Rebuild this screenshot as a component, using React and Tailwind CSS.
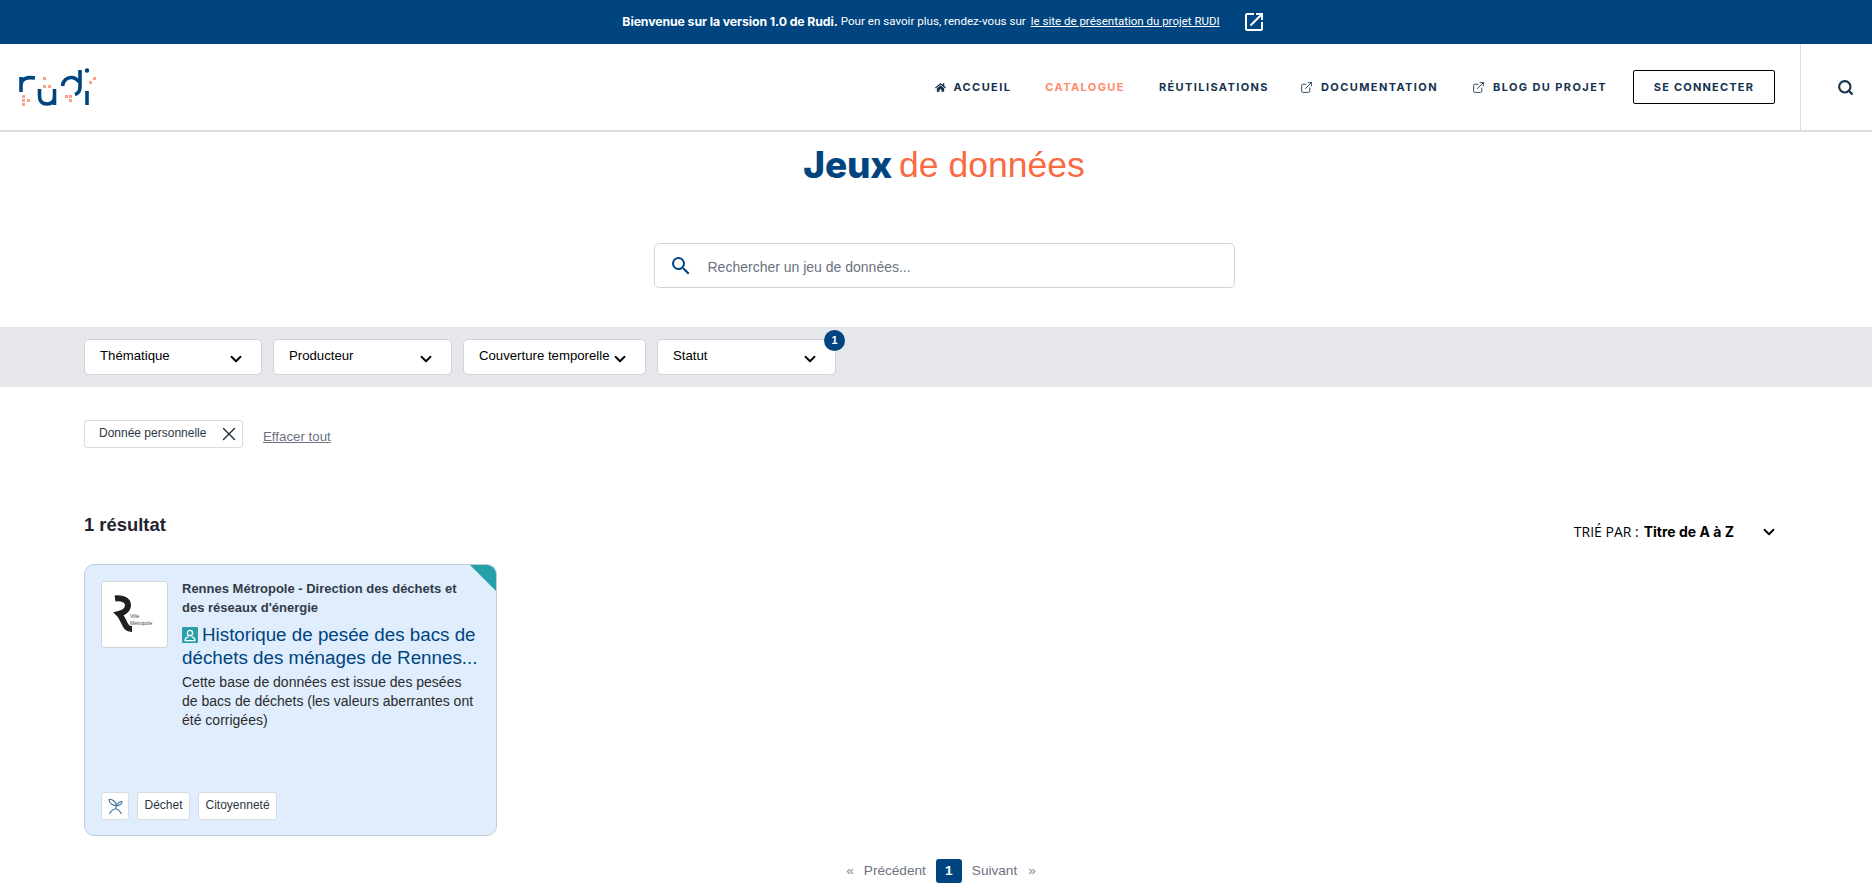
import React from "react";
import { ChevronDown, X, ExternalLink, Search } from "lucide-react";
import { MdOpenInNew, MdSearch } from "react-icons/md";
import { FaHome } from "react-icons/fa";

function Logo() {
  return (
    <svg width="80" height="40" viewBox="0 0 80 40" fill="none">
      <g stroke="#00457f" strokeWidth="3.6" fill="none">
        <path d="M4 25 V10 M4 18 C4 12.5 9 9.5 18 11" />
        <path d="M22.5 22 V29 C22.5 35 26 37 30 37 C34 37 37.5 35 37.5 29 V22 M37.5 28 V38" />
        <path d="M45.5 19 C46 13.5 50 10.5 54 10.5 C57 10.5 60 12 62 15" />
        <path d="M63 3 V20 C63 24 61 26.5 58 27.5" />
        <path d="M70 24 V38" />
      </g>
      <circle cx="70" cy="3.5" r="2.2" fill="#00457f" />
      <g fill="#ffa08a">
        <rect x="26" y="10" width="3" height="3" /><rect x="26" y="18" width="3" height="3" /><rect x="31" y="18" width="3" height="3" />
        <rect x="5" y="28" width="3" height="3" /><rect x="5" y="32" width="3" height="3" /><rect x="10" y="32" width="3" height="3" /><rect x="5" y="36" width="3" height="3" />
        <rect x="48" y="28" width="3" height="3" /><rect x="52" y="28" width="3" height="3" /><rect x="52" y="32" width="3" height="3" />
        <rect x="76" y="10" width="3" height="3" /><rect x="72" y="14" width="3" height="3" />
      </g>
    </svg>
  );
}

function NavItem({ children, icon, active, gap }) {
  return (
    <a className={"flex items-center text-[11px] font-bold tracking-[1.4px] whitespace-nowrap " + (gap || "gap-[7px] ") + (active ? " text-[#ff8a6b]" : " text-[#15324f]")}>
      {icon}
      {children}
    </a>
  );
}

function Filter({ label, width, badge }) {
  return (
    <div className={"relative flex h-[36px] items-center justify-between rounded-[5px] border border-[#d1d5db] bg-white pr-[16px] pl-[15px] text-[13.2px] text-black " + width}>
      <span className="-translate-y-[1px] whitespace-nowrap">{label}</span>
      <ChevronDown size={18} strokeWidth={2.4} className="shrink-0 translate-y-[2px] text-black" />
      {badge && (
        <span className="absolute top-[-10px] right-[-10px] flex h-[21px] w-[21px] items-center justify-center rounded-full bg-[#00457f] text-[11px] font-bold text-white">
          {badge}
        </span>
      )}
    </div>
  );
}

function PersonBadge() {
  return (
    <svg width="16" height="16" viewBox="0 0 16 16" className="mr-[4px] inline-block align-[-2px]">
      <rect width="16" height="16" rx="1" fill="#2a9fa8" />
      <circle cx="8" cy="6" r="2.6" fill="none" stroke="#fff" strokeWidth="1.3" />
      <path d="M3 14 C3 10.5 5 10 6.5 9.6 M13 14 C13 10.5 11 10 9.5 9.6 M3 13.6 H13" fill="none" stroke="#fff" strokeWidth="1.3" />
    </svg>
  );
}

function PlantIcon() {
  return (
    <svg width="15" height="17" viewBox="0 0 15 17" fill="none" stroke="#4b7ba3" strokeWidth="1.2">
      <path d="M1 1.5 C4 0.5 8 4 8.5 7.5 C5 8 1 5 1 1.5 Z" />
      <path d="M14 3.5 C11.5 3.5 9.5 5.5 8.5 7.5 C11 8 13.5 6.5 14 3.5 Z" />
      <path d="M8.5 7.5 L7.5 11" />
      <path d="M1.5 16 C3 13 5.5 11 7.5 11 C9.5 11 12 13 13.5 16" />
    </svg>
  );
}

function RLogo() {
  return (
    <div className="relative flex h-[67px] w-[67px] shrink-0 items-center justify-center rounded-[3px] border border-[#d1d5db] bg-white">
      <svg width="20" height="38" viewBox="0 0 20 38" fill="none" className="absolute top-[13px] left-[11px]">
        <path d="M2 3.5 C9 2.5 15 5 15 10 C15 15 10 18 6 19 C9 22 11 28 13 31 C14 33 16 34 19 34" stroke="#1f1f1f" strokeWidth="6" />
      </svg>
      <div className="absolute top-[31px] left-[28px] text-[5px] leading-[7px] font-medium text-[#444]">
        Ville
        <br />
        Métropole
      </div>
    </div>
  );
}

function Tag({ children }) {
  return (
    <div className="flex h-[28px] items-center rounded-[3px] border border-[#d8dde3] bg-white px-[6.5px] pb-[3px] text-[12px] text-[#2c3745]">
      {children}
    </div>
  );
}

export default function App() {
  return (
    <div className="min-h-[892px] bg-white font-['Liberation_Sans',Arial,sans-serif] text-black">
      <div className="flex h-[44px] items-center justify-center bg-[#00457f] pl-[16px] text-white">
        <div className="flex items-center font-['Roboto',sans-serif]">
          <span className="font-['Inter',sans-serif] text-[12.3px] font-bold tracking-[-0.1px]">Bienvenue sur la version 1.0 de Rudi.</span>
          <span className="ml-[3px] text-[11.6px]">Pour en savoir plus, rendez-vous sur</span>
          <a className="ml-[5px] text-[11.5px] underline">le site de présentation du projet RUDI</a>
          <MdOpenInNew size={24} className="ml-[22px]" />
        </div>
      </div>

      <header className="flex h-[88px] items-stretch border-b-2 border-[#dcdde1]">
        <div className="flex items-center pl-[17px]">
          <Logo />
        </div>
        <nav className="ml-auto flex items-center gap-[34px] pr-[25px] font-['Inter',sans-serif]">
          <NavItem icon={<FaHome size={11} />}>ACCUEIL</NavItem>
          <NavItem active>CATALOGUE</NavItem>
          <div className="-mr-[3px]">
            <NavItem>RÉUTILISATIONS</NavItem>
          </div>
          <NavItem gap="gap-[8px]" icon={<ExternalLink size={13} strokeWidth={1.6} />}>DOCUMENTATION</NavItem>
          <NavItem gap="gap-[8px]" icon={<ExternalLink size={13} strokeWidth={1.6} />}>BLOG DU PROJET</NavItem>
          <button className="-ml-[8px] flex h-[34px] w-[142px] items-center justify-center rounded-[2px] border border-black text-[11px] font-bold tracking-[1.2px] text-[#15324f]">
            SE CONNECTER
          </button>
        </nav>
        <div className="flex w-[72px] items-center justify-center border-l border-[#dcdde1] pl-[17px]">
          <Search size={17} strokeWidth={3} className="text-[#15324f]" />
        </div>
      </header>

      <h1 className="mt-[11px] flex h-[44px] items-center justify-center gap-[7px] pl-[16px] text-[35.5px] leading-[44px]">
        <span className="font-['Inter',sans-serif] text-[37px] font-extrabold tracking-[-0.2px] text-[#00457f]">Jeux</span>
        <span className="text-[#f96a43]">de données</span>
      </h1>

      <div className="mt-[56px] flex justify-center pl-[16px]">
        <div className="flex h-[45px] w-[581px] items-center rounded-[5px] border border-[#d1d5db] bg-white pl-[14px]">
          <MdSearch size={24} className="text-[#00457f]" />
          <span className="ml-[15px] translate-y-[2px] text-[14px] text-[#6b7280]">Rechercher un jeu de données...</span>
        </div>
      </div>

      <div className="mt-[39px] flex h-[60px] items-center gap-[11px] bg-[#e5e7eb] pl-[84px]">
        <Filter label="Thématique" width="w-[178px]" />
        <Filter label="Producteur" width="w-[179px]" />
        <Filter label="Couverture temporelle" width="w-[183px]" />
        <Filter label="Statut" width="w-[179px]" badge="1" />
      </div>

      <div className="mt-[33px] flex items-center pl-[84px]">
        <div className="flex h-[28px] w-[159px] items-center justify-between rounded-[3px] border border-[#d8dde3] bg-white pr-[2px] pl-[14px] text-[12px] text-[#2c3745]">
          <span className="-translate-y-[1px]">Donnée personnelle</span>
          <X size={22} strokeWidth={1.5} className="text-[#1f2937]" />
        </div>
        <a className="ml-[20px] translate-y-[3px] text-[13.3px] text-[#6b7280] underline">Effacer tout</a>
      </div>

      <div className="mt-[65px] flex items-start justify-between pr-[94px] pl-[84px]">
        <div className="text-[18.4px] leading-[24px] font-bold text-[#1f2430]">1 résultat</div>
        <div className="mt-[8px] flex items-center text-[14px] text-black">
          <span className="font-['Open_Sans',sans-serif]">TRIÉ PAR :</span>
          <span className="ml-[5px] font-['Inter',sans-serif] font-bold">Titre de A à Z</span>
          <ChevronDown size={18} strokeWidth={2.4} className="ml-[26px]" />
        </div>
      </div>

      <div className="pl-[84px]">
        <div className="relative mt-[22px] flex h-[272px] w-[413px] flex-col overflow-hidden rounded-[10px] border border-[#c3ccd6] bg-[#dfedfc] pt-[16px] pr-[16px] pb-[15px] pl-[16px]">
          <div className="absolute top-0 right-0 h-0 w-0 border-t-[26px] border-l-[26px] border-t-[#26a0a8] border-l-transparent" />
          <div className="flex gap-[14px]">
            <RLogo />
            <div className="-mt-[2px] min-w-0">
              <div className="text-[13px] leading-[19px] font-bold text-[#333b47]">
                Rennes Métropole - Direction des déchets et des réseaux d'énergie
              </div>
              <div className="mt-[6px] text-[18.8px] leading-[23px] text-[#00457f]">
                <PersonBadge />
                Historique de pesée des bacs de déchets des ménages de Rennes...
              </div>
              <div className="mt-[4px] text-[14px] leading-[19px] text-[#2b2b2b]">
                Cette base de données est issue des pesées de bacs de déchets (les valeurs aberrantes ont été corrigées)
              </div>
            </div>
          </div>
          <div className="mt-auto flex gap-[8px]">
            <div className="flex h-[28px] w-[28px] items-center justify-center rounded-[3px] border border-[#d8dde3] bg-white">
              <PlantIcon />
            </div>
            <Tag>Déchet</Tag>
            <Tag>Citoyenneté</Tag>
          </div>
        </div>
      </div>

      <div className="mt-[23px] flex items-center justify-center pl-[10px] text-[13.6px] text-[#6b7280]">
        <span className="text-[#7c8aa0]">«</span>
        <span className="ml-[10px]">Précédent</span>
        <span className="ml-[10px] flex h-[24px] w-[26px] items-center justify-center rounded-[3px] bg-[#00457f] font-bold text-white">1</span>
        <span className="ml-[10px]">Suivant</span>
        <span className="ml-[11px] text-[#7c8aa0]">»</span>
      </div>
    </div>
  );
}
